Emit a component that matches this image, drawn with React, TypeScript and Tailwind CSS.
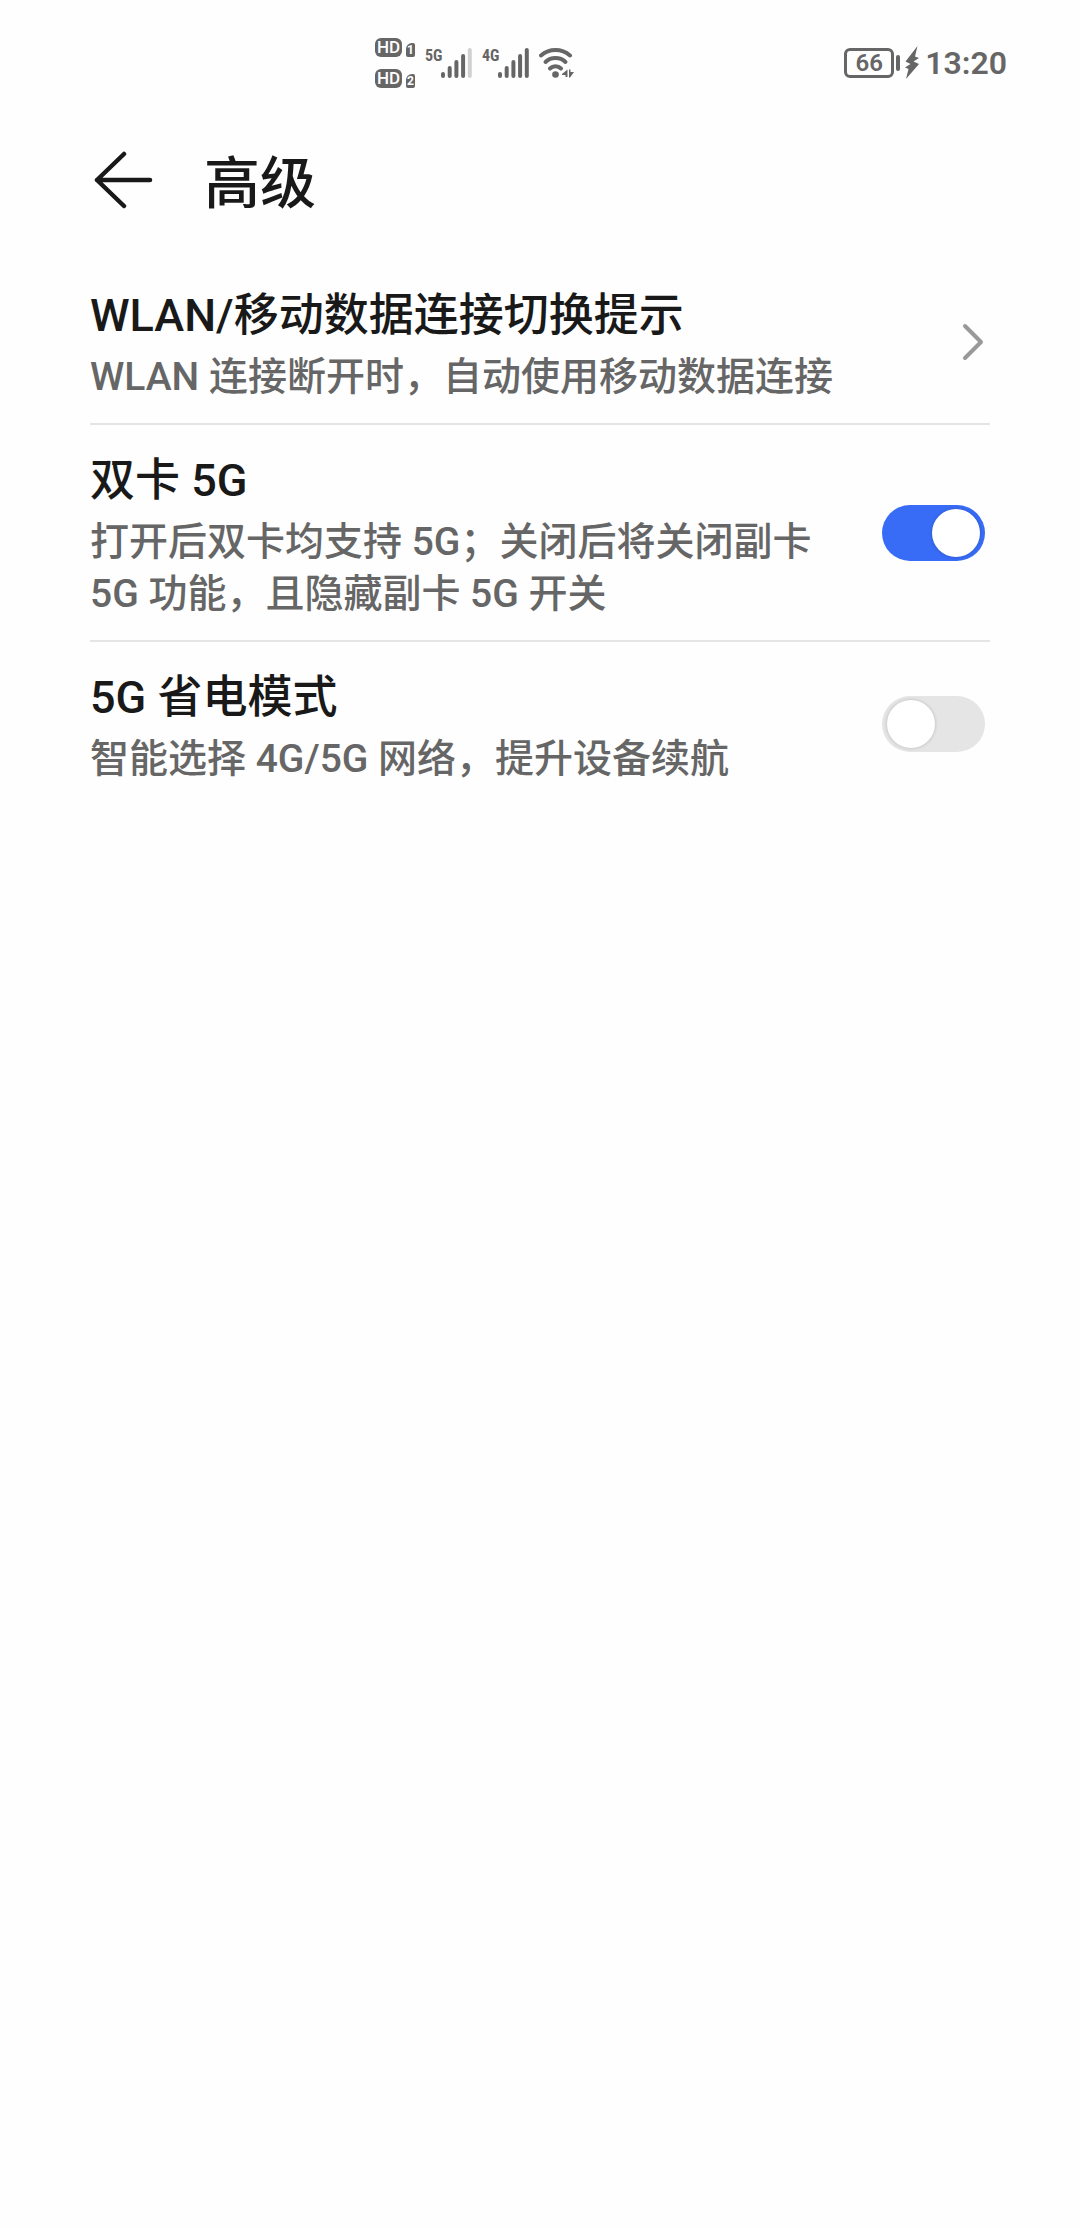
import { useId, useState } from 'react'

function HdBadge({ sim }: { sim: number }) {
  return (
    <div className="flex items-end gap-1">
      <span className="flex h-[19px] w-[27px] items-center justify-center rounded-md bg-[#666] text-[17px] leading-[19px] font-medium text-white">
        HD
      </span>
      <span className="flex h-[14px] w-[9px] items-center justify-center rounded-xs rounded-tl-md bg-[#666] text-xs leading-[14px] font-bold text-white">
        {sim}
      </span>
    </div>
  )
}

const BAR_HEIGHTS = [6, 12, 18, 24, 30]

function Signal({ label, level }: { label: string; level: number }) {
  return (
    <div className="flex items-start">
      <svg width="16" height="20" viewBox="0 0 16 20" className="overflow-visible">
        <text x="0" y="13" fontSize="16" fontWeight="700" fill="#666" fontFamily="Roboto Condensed, Roboto">
          {label}
        </text>
      </svg>
      <svg width="31" height="30" viewBox="0 0 31 30" aria-hidden="true">
        {BAR_HEIGHTS.map((h, i) => (
          <rect
            key={h}
            x={i * 6.7}
            y={30 - h}
            width="4"
            height={h}
            rx="2"
            fill={i < level ? '#666' : '#d1d1d1'}
          />
        ))}
      </svg>
    </div>
  )
}

function Wifi() {
  return (
    <svg width="37" height="30" viewBox="0 0 37 30" aria-label="WLAN" fill="none">
      <g stroke="#666" strokeWidth="4" strokeLinecap="round">
        <path d="M2 7.500C10.500 0.200 22.500 0.200 31 7.500" />
        <path d="M6.500 14C12 8.800 21 8.800 26.500 14" />
        <path d="M11 20.500C14 17.500 19 17.500 22 20.500" />
      </g>
      <circle cx="16.500" cy="26.500" r="3.300" fill="#666" />
      <path d="M23 26L28.500 21.500V29H26.500V27H23ZM30 21.500H31.500V24H35L31 29.500H30Z" fill="#666" />
    </svg>
  )
}

function StatusBar() {
  return (
    <header className="flex h-[126px] items-center justify-between pr-[73px] pl-[375px] text-[#666]">
      <div className="flex items-center">
        <div className="flex flex-col gap-3">
          <HdBadge sim={1} />
          <HdBadge sim={2} />
        </div>
        <div className="ml-[10px] flex items-start gap-[10px]">
          <Signal label="5G" level={4} />
          <Signal label="4G" level={5} />
          <Wifi />
        </div>
      </div>
      <div className="flex items-center">
        <span className="flex h-[30px] w-[50px] items-center justify-center rounded-md border-[3px] text-2xl leading-6 font-semibold">
          66
        </span>
        <span className="ml-[2px] h-4 w-1 rounded-sm bg-[#666]" />
        <svg width="14" height="34" viewBox="0 0 14 34" className="ml-[5px]" aria-label="充电中">
          <path d="M12.500 0L0.500 15.500L5.500 18L0 21.500L3.500 23L1 33L14 18L8.500 15.500L14 12L10 10.500Z" fill="#666" />
        </svg>
        <time className="ml-[6px] text-[32px] leading-9 font-semibold">13:20</time>
      </div>
    </header>
  )
}

const ROW = 'flex w-full items-center justify-between gap-6 py-5 text-left'

function RowText({ title, description }: { title: string; description: string }) {
  return (
    <span className="flex flex-col gap-[6px] pt-[7px]">
      <span className="text-[45px] leading-[58px] font-medium">{title}</span>
      <span className="text-[39px] leading-[52px] font-medium text-[#666]">{description}</span>
    </span>
  )
}

function SwitchRow({
  title,
  description,
  defaultOn = false,
}: {
  title: string
  description: string
  defaultOn?: boolean
}) {
  const id = useId()
  const [on, setOn] = useState(defaultOn)

  return (
    <label htmlFor={id} className={ROW}>
      <RowText title={title} description={description} />
      <input
        id={id}
        type="checkbox"
        role="switch"
        checked={on}
        onChange={(e) => setOn(e.target.checked)}
        className="mr-[5px] h-14 w-[103px] shrink-0 appearance-none rounded-full bg-[#e5e5e5] p-1 before:ml-px before:block before:size-12 before:rounded-full before:bg-white before:shadow-[0_0_3px_1px_rgba(0,0,0,0.12)] checked:bg-[#386cf6] checked:before:ml-[46px]"
      />
    </label>
  )
}

export default function App() {
  return (
    <div className="min-h-screen bg-[#fefefe] font-['Roboto','Noto_Sans_CJK_SC',sans-serif] text-[#191919]">
      <StatusBar />

      <div className="flex items-center gap-[50px] px-[94px] pt-[18px] pb-4">
        <button type="button" aria-label="返回" className="pb-2">
          <svg width="60" height="60" viewBox="0 0 60 60" fill="none">
            <path
              d="M30 4L3 30L30 56M3 30H56"
              stroke="#191919"
              strokeWidth="4.500"
              strokeLinecap="round"
              strokeLinejoin="round"
            />
          </svg>
        </button>
        <h1 className="text-[56px] leading-[80px] font-medium">高级</h1>
      </div>

      <main className="mt-5 divide-y-2 divide-[#e5e5e5] px-[90px]">
        <button type="button" className={ROW}>
          <RowText title="WLAN/移动数据连接切换提示" description="WLAN 连接断开时，自动使用移动数据连接" />
          <svg width="24" height="40" viewBox="0 0 24 40" fill="none" className="mr-[5px] shrink-0" aria-hidden="true">
            <path d="M4 4L20 20L4 36" stroke="#999" strokeWidth="4" strokeLinecap="round" strokeLinejoin="round" />
          </svg>
        </button>
        <SwitchRow
          title="双卡 5G"
          description="打开后双卡均支持 5G；关闭后将关闭副卡 5G 功能，且隐藏副卡 5G 开关"
          defaultOn
        />
        <SwitchRow title="5G 省电模式" description="智能选择 4G/5G 网络，提升设备续航" />
      </main>
    </div>
  )
}
